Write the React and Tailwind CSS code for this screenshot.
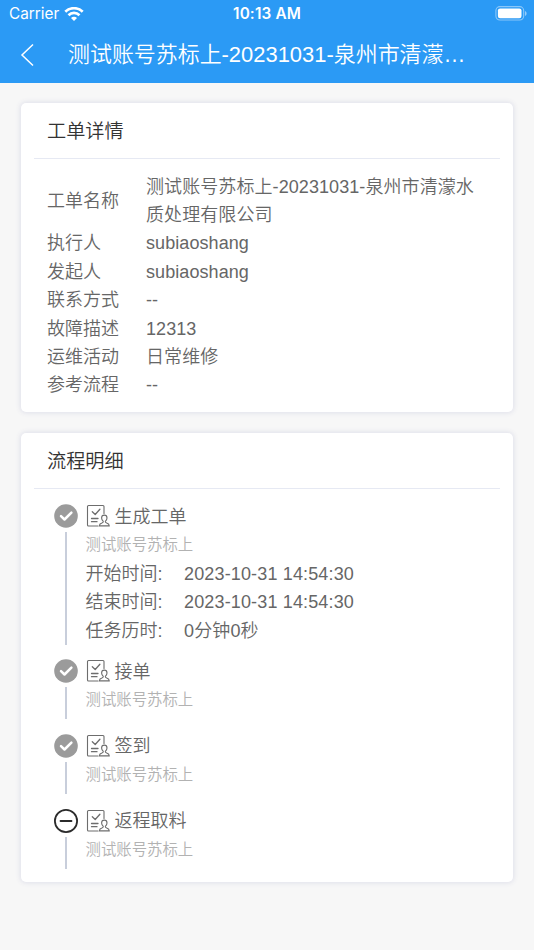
import React from 'react';
import { clsx } from 'clsx';

const ACCOUNT = '测试账号苏标上';

const DETAILS = [
  { label: '工单名称', value: '测试账号苏标上-20231031-泉州市清濛水质处理有限公司' },
  { label: '执行人', value: 'subiaoshang' },
  { label: '发起人', value: 'subiaoshang' },
  { label: '联系方式', value: '--' },
  { label: '故障描述', value: '12313' },
  { label: '运维活动', value: '日常维修' },
  { label: '参考流程', value: '--' },
];

const STEPS = [
  {
    title: '生成工单',
    done: true,
    times: [
      { label: '开始时间:', value: '2023-10-31 14:54:30' },
      { label: '结束时间:', value: '2023-10-31 14:54:30' },
      { label: '任务历时:', value: '0分钟0秒' },
    ],
  },
  { title: '接单', done: true },
  { title: '签到', done: true },
  { title: '返程取料', done: false },
];

function WifiIcon() {
  return (
    <svg className="ml-[5px] h-[15px] w-5" viewBox="0 0 20 15" fill="none" stroke="white" strokeWidth="2.7">
      <path d="M1.3 4.8a12.3 12.3 0 0 1 17.4 0" />
      <path d="M4.5 8.2a7.8 7.8 0 0 1 11 0" />
      <path d="M10 14 7 11a4.2 4.2 0 0 1 6 0Z" fill="white" stroke="none" />
    </svg>
  );
}

function BatteryIcon() {
  return (
    <svg className="h-[15px] w-8" viewBox="0 0 32 15" fill="none">
      <rect x="0.9" y="0.6" width="27.8" height="13.4" rx="4" stroke="white" strokeOpacity="0.45" strokeWidth="1.1" />
      <rect x="2.9" y="2.4" width="23.6" height="9.8" rx="2.2" fill="white" />
      <path d="M30 5v5c1-.5 1.6-1.4 1.6-2.5S31 5.5 30 5Z" fill="white" fillOpacity="0.5" />
    </svg>
  );
}

function StatusIcon({ done }) {
  if (done) {
    return (
      <svg className="h-6 w-6 shrink-0" viewBox="0 0 24 24" fill="none">
        <circle cx="12" cy="12" r="11.8" fill="#9b9b9b" />
        <path d="m7 12.2 3.500 3.300 6.900-6.900" stroke="white" strokeWidth="2.5" strokeLinecap="round" strokeLinejoin="round" />
      </svg>
    );
  }
  return (
    <svg className="h-6 w-6 shrink-0" viewBox="0 0 24 24" fill="none" stroke="#2b2b2b" strokeWidth="1.8">
      <circle cx="12" cy="12" r="11.1" />
      <path d="M6.5 12h11" strokeLinecap="round" />
    </svg>
  );
}

function TaskIcon() {
  return (
    <svg className="h-6 w-6" viewBox="0 0 24 24" fill="none" stroke="#6d6d6d" strokeWidth="1.1" strokeLinecap="round" strokeLinejoin="round">
      <path d="M18 9.5V2.5a1 1 0 0 0-1-1H2.5a1 1 0 0 0-1 1v18.500a1 1 0 0 0 1 1h9.500" />
      <path d="m6.300 7.800 2.900 2.700 4.700-5.200" strokeWidth="1.300" />
      <path d="M5.500 14.500h6.500M5.500 17.700h5.500" strokeWidth="1.300" />
      <path d="M17.300 17.400c-1.100-1-1.700-2.200-1.700-3.400 0-1.900 1.100-2.900 2.700-2.900s2.700 1 2.700 2.900c0 1.200-.6 2.400-1.700 3.400-.2 1 .3 1.300 1.400 1.700 1.800.6 2.600 1 2.600 2.800h-10c0-1.800.8-2.200 2.600-2.800 1.100-.4 1.600-.7 1.400-1.700Z" />
    </svg>
  );
}

function Card({ title, className, children }) {
  return (
    <section className={clsx('rounded-[5px] bg-white px-[13px] shadow-[0_0_5px_1px_#dfe0ea]', className)}>
      <h2 className="h-14 border-b border-[#e6e9f3] pl-[13.5px] text-[19.2px] leading-[57px] text-[#333]">{title}</h2>
      {children}
    </section>
  );
}

function Step({ step }) {
  return (
    <li className={clsx('flex', step.times ? 'h-[155px]' : 'h-[74.800px]')}>
      <div className="flex w-6 shrink-0 flex-col items-center">
        <StatusIcon done={step.done} />
        <div className={clsx('mt-1 ml-px w-[2px] bg-[#c8cedb]', step.times ? 'h-[113px]' : 'h-8')} />
      </div>
      <div className="pl-2">
        <div className="flex h-6 items-center">
          <TaskIcon />
          <span className="relative top-px pl-[5px]">{step.title}</span>
        </div>
        <p className="mt-[2px] h-[30px] text-[15.4px] leading-[30px] text-[#b2b2b2]">{ACCOUNT}</p>
        {step.times?.map((time) => (
          <div key={time.label} className="flex h-[28.4px] leading-[28.4px]">
            <span className="w-[98.5px]">{time.label}</span>
            <span className="tracking-[0.15px]">{time.value}</span>
          </div>
        ))}
      </div>
    </li>
  );
}

export default function App() {
  return (
    <div className="min-h-[950px] bg-[#f7f7f7] font-['Liberation_Sans','Noto_Sans_CJK_SC',sans-serif] text-[18px] font-[350] text-[#666]">
      <header className="h-[83px] bg-[#2b9af5] text-white">
        <div className="grid h-[27px] grid-cols-3 items-center pr-[7px] pl-[9px] font-[Inter,sans-serif] text-[15.3px]">
          <div className="flex items-center pt-px font-normal">
            Carrier
            <WifiIcon />
          </div>
          <div className="pt-px pr-[2px] text-center font-semibold tracking-[0.15px]">10:13 AM</div>
          <div className="flex justify-end">
            <BatteryIcon />
          </div>
        </div>
        <div className="flex h-14 items-center pl-5">
          <svg className="h-6 w-[15px]" viewBox="0 0 15 24" fill="none" stroke="white" strokeWidth="1.5">
            <path d="M13 1.5 2 12l11 10.5" />
          </svg>
          <h1 className="ml-[33px] pt-px text-[21.95px] whitespace-nowrap">测试账号苏标上-20231031-泉州市清濛…</h1>
        </div>
      </header>

      <main className="flex flex-col gap-[21px] pt-5 pr-[21px] pl-[20.5px]">
        <Card title="工单详情" className="h-[309px]">
          <dl className="pt-[13.6px] pl-[13.5px] leading-[28.4px]">
            {DETAILS.map((item) => (
              <div key={item.label} className="flex items-center">
                <dt className="w-[99px] shrink-0">{item.label}</dt>
                <dd className="w-[340px] tracking-[0.08px]">{item.value}</dd>
              </div>
            ))}
          </dl>
        </Card>

        <Card title="流程明细" className="h-[449px]">
          <ol className="pt-[15px] pl-5">
            {STEPS.map((step) => (
              <Step key={step.title} step={step} />
            ))}
          </ol>
        </Card>
      </main>
    </div>
  );
}
